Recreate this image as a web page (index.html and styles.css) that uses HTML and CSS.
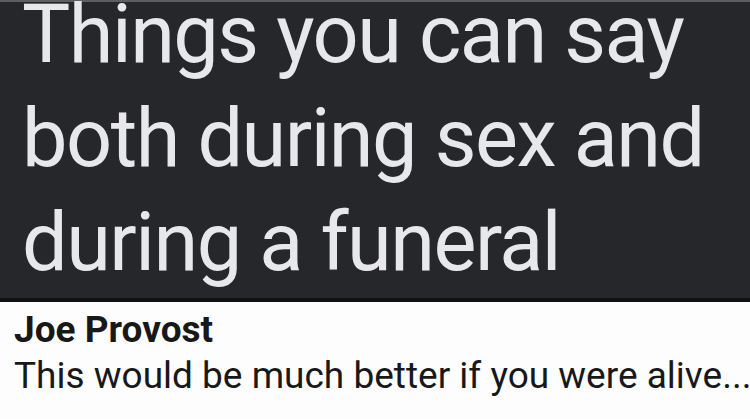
FILE: index.html
```html
<!DOCTYPE html>
<html>
<head>
<meta charset="utf-8">
<link rel="stylesheet" href="styles.css">
</head>
<body>
<div class="meme">
  <div class="panel">
    <div class="headline">
      <span class="line">Things you can say</span>
      <span class="line">both during sex and</span>
      <span class="line">during a funeral</span>
    </div>
  </div>
  <div class="comment">
    <div class="author">Joe Provost</div>
    <div class="text">This would be much better if you were alive...</div>
  </div>
</div>
</body>
</html>
```
FILE: styles.css
```css
html, body {
  margin: 0;
  padding: 0;
  background: #fdfdfd;
}
.meme {
  width: 750px;
  height: 419px;
  overflow: hidden;
  display: flex;
  flex-direction: column;
  font-family: Roboto, "Noto Sans", sans-serif;
}
.panel {
  height: 296px;
  flex: none;
  background: #25272b;
  border-top: 2px solid #5c5e62;
  border-bottom: 4px solid #101113;
  padding: 0 0 0 22px;
}
.headline {
  display: flex;
  flex-direction: column;
  gap: 39px;
  font-size: 81px;
  color: #e8e8ea;
  letter-spacing: -1.5px;
  white-space: nowrap;
}
.line {
  display: block;
  line-height: 65px;
}
.comment {
  padding: 6px 0 0 14px;
  color: #181818;
  background: #fdfdfd;
}
.author {
  font-weight: 700;
  font-size: 37px;
  line-height: 44px;
}
.text {
  font-size: 37px;
  line-height: 48px;
  white-space: nowrap;
}
```
